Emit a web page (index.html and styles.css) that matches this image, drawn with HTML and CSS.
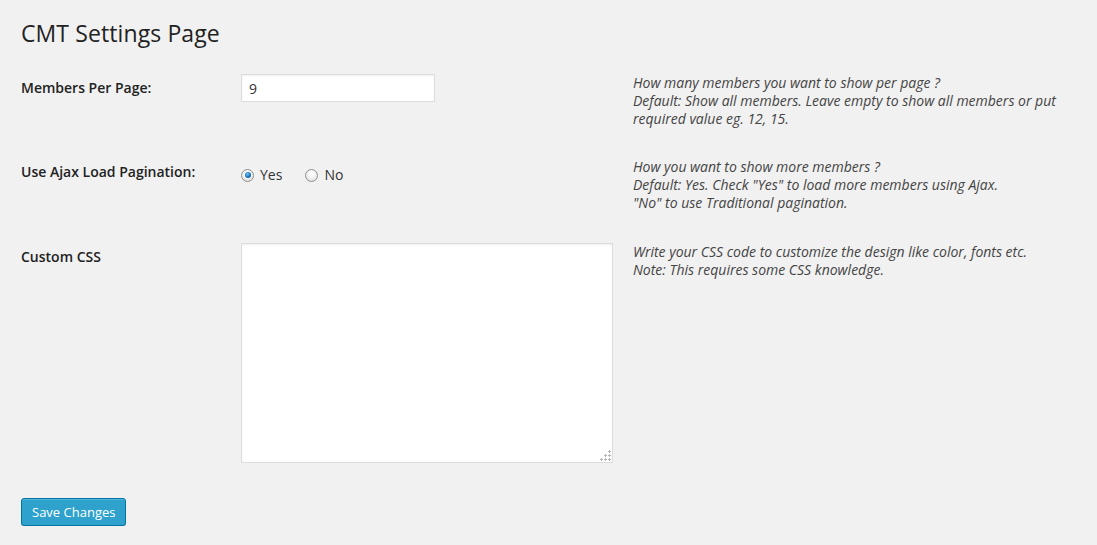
FILE: index.html
```html
<!DOCTYPE html>
<html>
<head>
<meta charset="utf-8">
<title>CMT Settings Page</title>
<link rel="stylesheet" href="styles.css">
</head>
<body>
<div class="wrap">
  <h2 class="page-title">CMT Settings Page</h2>
  <form class="settings-form">
    <table class="form-table">
      <tr>
        <th>Members Per Page:</th>
        <td class="field"><input type="text" class="text-input" value="9"></td>
        <td class="desc">How many members you want to show per page ?<br>Default: Show all members. Leave empty to show all members or put required value eg. 12, 15.</td>
      </tr>
      <tr>
        <th>Use Ajax Load Pagination:</th>
        <td class="field">
          <div class="radios">
            <label class="radio-label"><input type="radio" name="ajax" class="radio" checked> Yes</label>
            <label class="radio-label"><input type="radio" name="ajax" class="radio"> No</label>
          </div>
        </td>
        <td class="desc">How you want to show more members ?<br>Default: Yes. Check "Yes" to load more members using Ajax.<br>"No" to use Traditional pagination.</td>
      </tr>
      <tr class="row-css">
        <th>Custom CSS</th>
        <td class="field">
          <div class="textarea-box">
            <textarea class="css-area"></textarea>
            <span class="grip"></span>
          </div>
        </td>
        <td class="desc">Write your CSS code to customize the design like color, fonts etc.<br>Note: This requires some CSS knowledge.</td>
      </tr>
    </table>
    <p class="submit"><button type="button" class="button-primary">Save Changes</button></p>
  </form>
</div>
</body>
</html>
```
FILE: styles.css
```css
html, body {
  margin: 0;
  padding: 0;
  background: #f1f1f1;
  color: #222;
  font-family: "Open Sans", "Liberation Sans", sans-serif;
  font-size: 13px;
  line-height: 1.4em;
}

.wrap {
  padding: 0 21px;
}

.page-title {
  margin: 0;
  padding: 19px 0 0;
  font-size: 23px;
  font-weight: 400;
  line-height: 29px;
  color: #222;
  letter-spacing: 0.1px;
}

.settings-form {
  margin: 11px 0 0;
}

.form-table {
  border-collapse: collapse;
  table-layout: fixed;
  width: 1052px;
}

.form-table th {
  width: 200px;
  padding: 20px 10px 20px 0;
  text-align: left;
  vertical-align: top;
  font-size: 14px;
  font-weight: 600;
  line-height: 1.3;
  color: #222;
}

.form-table td {
  padding: 15px 10px;
  vertical-align: top;
}

.form-table .row-css th {
  padding-top: 21px;
}

.form-table .row-css td {
  padding-top: 16px;
}

.form-table .field {
  width: 372px;
}

.form-table .desc {
  font-size: 14px;
  line-height: 18px;
  font-style: italic;
  color: #444;
  width: 440px;
  padding-right: 0;
}

.text-input {
  box-sizing: border-box;
  width: 194px;
  height: 28px;
  margin: 0;
  padding: 3px 7px;
  border: 1px solid #ddd;
  background: #fff;
  box-shadow: inset 0 1px 2px rgba(0,0,0,.07);
  font-family: "Open Sans", "Liberation Sans", sans-serif;
  font-size: 14px;
  color: #333;
  outline: none;
}

.radios {
  display: flex;
  gap: 23px;
  padding-top: 8px;
}

.radio-label {
  display: flex;
  align-items: center;
  gap: 6px;
  font-size: 14px;
  color: #333;
  line-height: 18px;
}

.radio {
  -webkit-appearance: none;
  appearance: none;
  box-sizing: border-box;
  width: 13px;
  height: 13px;
  margin: 0;
  border: 1px solid #8e8f8f;
  border-radius: 50%;
  background: radial-gradient(circle at 50% 35%, #ffffff 0%, #f0f0f0 50%, #d8d8d8 100%);
  position: relative;
}

.radio:checked::after {
  content: "";
  position: absolute;
  left: 2.5px;
  top: 2.5px;
  width: 6px;
  height: 6px;
  border-radius: 50%;
  background: radial-gradient(circle at 40% 35%, #6fc3ff 0%, #1a72b8 55%, #0d3f6b 100%);
}

.textarea-box {
  position: relative;
  width: 372px;
  height: 220px;
}

.css-area {
  box-sizing: border-box;
  display: block;
  width: 372px;
  height: 220px;
  margin: 0;
  border: 1px solid #ddd;
  background: #fff;
  box-shadow: inset 0 1px 2px rgba(0,0,0,.07);
  resize: none;
  outline: none;
}

.grip {
  position: absolute;
  right: 2px;
  bottom: 2px;
  width: 11px;
  height: 11px;
  background:
    radial-gradient(circle, #b5b5b5 1.2px, transparent 1.3px) 8px 0 / 3px 3px no-repeat,
    radial-gradient(circle, #b5b5b5 1.2px, transparent 1.3px) 4px 4px / 3px 3px no-repeat,
    radial-gradient(circle, #b5b5b5 1.2px, transparent 1.3px) 8px 4px / 3px 3px no-repeat,
    radial-gradient(circle, #b5b5b5 1.2px, transparent 1.3px) 0 8px / 3px 3px no-repeat,
    radial-gradient(circle, #b5b5b5 1.2px, transparent 1.3px) 4px 8px / 3px 3px no-repeat,
    radial-gradient(circle, #b5b5b5 1.2px, transparent 1.3px) 8px 8px / 3px 3px no-repeat;
}

.submit {
  margin: 20px 0 0;
  padding: 0;
}

.button-primary {
  box-sizing: border-box;
  height: 28px;
  margin: 0;
  padding: 0 10px 1px;
  border: 1px solid #0074a2;
  border-radius: 3px;
  background: #2ea2cc;
  color: #fff;
  font-family: "Open Sans", "Liberation Sans", sans-serif;
  font-size: 13px;
  line-height: 26px;
  white-space: nowrap;
  box-shadow: inset 0 1px 0 rgba(120,200,230,.5), 0 1px 0 rgba(0,0,0,.15);
  cursor: pointer;
}
```
